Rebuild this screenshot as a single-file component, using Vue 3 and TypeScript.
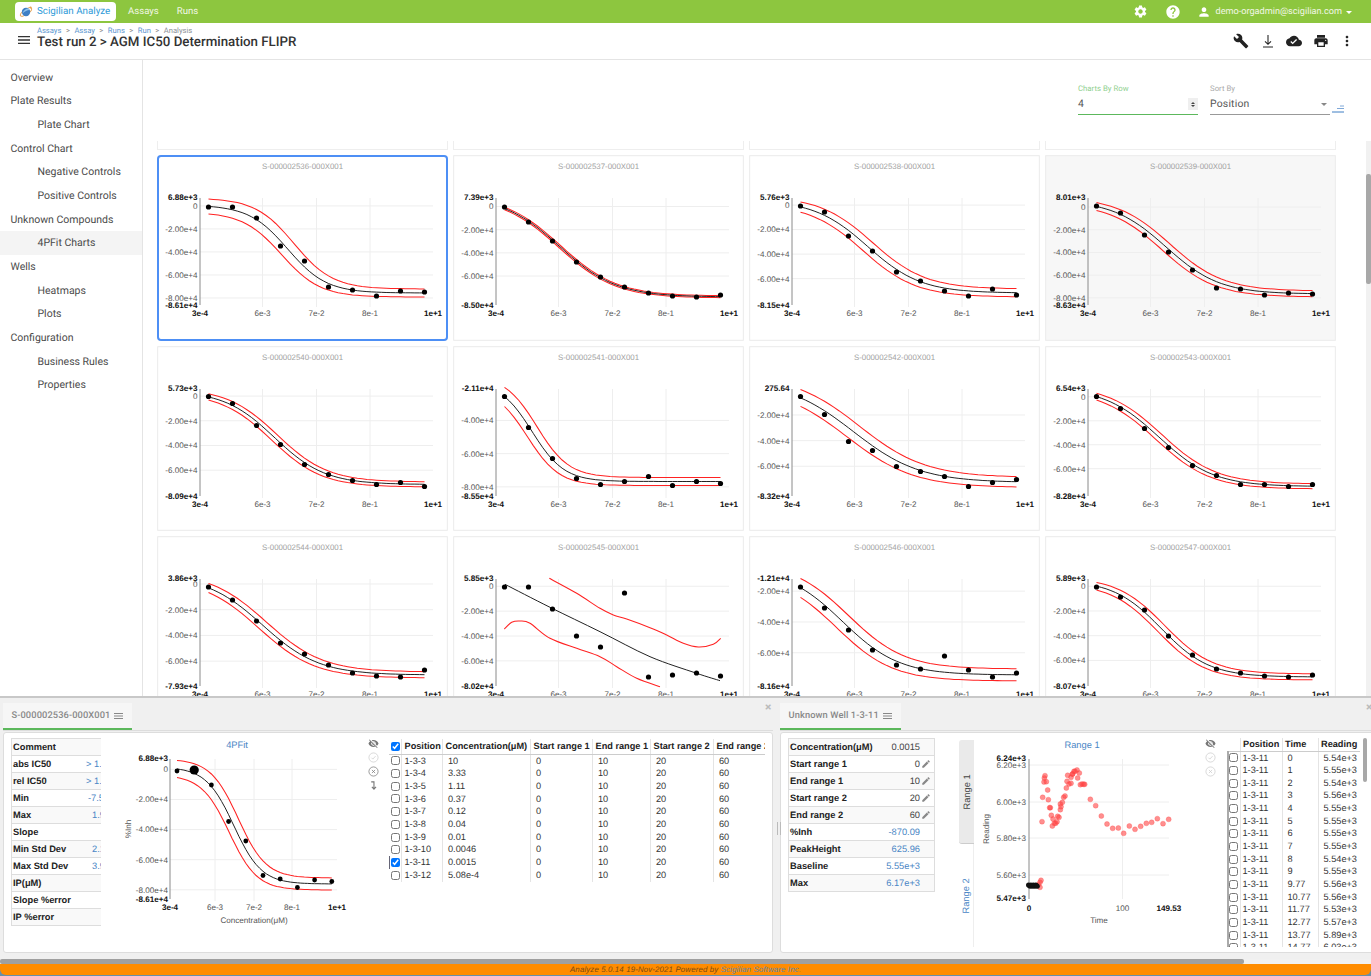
<script setup lang="ts">
type Curve = { T: number; B: number; m: number; k: number; d: [number, number]; s: number }
type Spec = {
  name: string; ymax: number; ymin: number; maxLabel: string; minLabel: string
  dots: number[]; curve?: Curve; active?: boolean; shaded?: boolean
}
type Geo = {
  ax: number; top: number; bot: number; right: number; xt: [number, string][]
  x0: number; dx: number; orgY: number; minBottomGap: number
}

const sigmoid = (c: Curve, g: Geo, dT: number, dB: number, shift: number): string => {
  const pts: string[] = []
  for (let i = 0; i <= 45; i++) {
    const t = i / 5
    const y = c.T + dT + (c.B + dB - c.T - dT) / (1 + Math.exp(-c.k * (t - c.m - shift)))
    pts.push(`${(g.x0 + g.dx * t).toFixed(1)},${(y - g.orgY).toFixed(1)}`)
  }
  return pts.join(' ')
}

const smooth = (p: number[][]): string => {
  const tx = (x: number) => x / 3 - 3
  const ty = (y: number) => y / 3 - 1
  const q = p.map(([x, y]) => [tx(x), ty(y)])
  let d = `M${q[0][0]} ${q[0][1]}`
  for (let i = 0; i < q.length - 1; i++) {
    const a = q[Math.max(i - 1, 0)], b = q[i], c = q[i + 1], e = q[Math.min(i + 2, q.length - 1)]
    const c1 = [b[0] + (c[0] - a[0]) / 6, b[1] + (c[1] - a[1]) / 6]
    const c2 = [c[0] - (e[0] - b[0]) / 6, c[1] - (e[1] - b[1]) / 6]
    d += ` C${c1[0].toFixed(1)} ${c1[1].toFixed(1)} ${c2[0].toFixed(1)} ${c2[1].toFixed(1)} ${c[0].toFixed(1)} ${c[1].toFixed(1)}`
  }
  return d
}

const build = (s: Spec, g: Geo) => {
  const scale = (g.bot - g.top) / (s.ymax - s.ymin)
  const ticks: { y: number; label: string }[] = []
  for (let v = 0; v >= -8; v -= 2) {
    const y = g.top + (s.ymax - v) * scale
    if (y - g.top < 4 || g.bot - y < g.minBottomGap) continue
    ticks.push({ y, label: v === 0 ? '0' : `${v.toFixed(2)}e+4` })
  }
  return {
    ...s,
    ticks,
    cx: s.dots.map((_, i) => g.x0 + g.dx * i),
    cy: s.dots.map((y) => y - g.orgY),
    black: s.curve ? sigmoid(s.curve, g, 0, 0, 0) : '',
    upper: s.curve ? sigmoid(s.curve, g, -s.curve.d[0], -s.curve.d[1], s.curve.s) : '',
    lower: s.curve ? sigmoid(s.curve, g, s.curve.d[0], s.curve.d[1], -s.curve.s) : ''
  }
}

const cardGeo = (orgY: number): Geo => ({
  ax: 43, top: 43, bot: 150, right: 276,
  xt: [[105.5, '6e-3'], [159.5, '7e-2'], [213, '8e-1']],
  x0: 51.5, dx: 24, orgY, minBottomGap: 6.2
})

const rows: Spec[][] = [
  [
    { name: 'S-000002536-000X001', ymax: 0.688, ymin: -8.61, maxLabel: '6.88e+3', minLabel: '-8.61e+4', active: true,
      dots: [207, 207, 218, 246, 261, 287, 290, 296, 291, 292], curve: { T: 205, B: 293, m: 3.3, k: 1.24, d: [7, 4], s: 0.26 } },
    { name: 'S-000002537-000X001', ymax: 0.739, ymin: -8.5, maxLabel: '7.39e+3', minLabel: '-8.50e+4',
      dots: [207, 222, 241, 262, 277, 287, 293, 296, 297, 295], curve: { T: 196, B: 297, m: 2.3, k: 0.85, d: [1, 1], s: 0.03 } },
    { name: 'S-000002538-000X001', ymax: 0.576, ymin: -8.15, maxLabel: '5.76e+3', minLabel: '-8.15e+4',
      dots: [206, 212, 236, 251, 272, 281, 291, 296, 289, 295], curve: { T: 200, B: 293, m: 2.8, k: 0.9, d: [4, 4], s: 0.2 } },
    { name: 'S-000002539-000X001', ymax: 0.801, ymin: -8.63, maxLabel: '8.01e+3', minLabel: '-8.63e+4', shaded: true,
      dots: [206, 213, 235, 252, 270, 288, 289, 295, 293, 294], curve: { T: 200, B: 294, m: 2.9, k: 0.9, d: [3, 3], s: 0.16 } }
  ],
  [
    { name: 'S-000002540-000X001', ymax: 0.573, ymin: -8.09, maxLabel: '5.73e+3', minLabel: '-8.09e+4',
      dots: [396, 403, 425, 444, 464, 474, 480, 484, 482, 486], curve: { T: 390, B: 484, m: 2.75, k: 0.95, d: [2.5, 2.5], s: 0.12 } },
    { name: 'S-000002541-000X001', ymax: -2.11, ymin: -8.55, maxLabel: '-2.11e+4', minLabel: '-8.55e+4',
      dots: [396, 427, 458, 478, 484, 481, 476, 485, 481, 483], curve: { T: 381, B: 481, m: 1.15, k: 1.5, d: [6, 4], s: 0.2 } },
    { name: 'S-000002542-000X001', ymax: 0.0276, ymin: -8.32, maxLabel: '275.64', minLabel: '-8.32e+4',
      dots: [396, 414, 441, 450, 466, 471, 476, 486, 482, 479], curve: { T: 380, B: 482, m: 2.2, k: 0.72, d: [6, 5], s: 0.25 } },
    { name: 'S-000002543-000X001', ymax: 0.654, ymin: -8.28, maxLabel: '6.54e+3', minLabel: '-8.28e+4',
      dots: [396, 408, 428, 447, 465, 475, 484, 484, 486, 484], curve: { T: 387, B: 486, m: 2.6, k: 0.88, d: [2.5, 2.5], s: 0.12 } }
  ],
  [
    { name: 'S-000002544-000X001', ymax: 0.386, ymin: -7.93, maxLabel: '3.86e+3', minLabel: '-7.93e+4',
      dots: [587, 600, 621, 643, 654, 665, 673, 676, 677, 670], curve: { T: 575, B: 675, m: 2.25, k: 0.85, d: [3, 3], s: 0.16 } },
    { name: 'S-000002545-000X001', ymax: 0.585, ymin: -8.02, maxLabel: '5.85e+3', minLabel: '-8.02e+4',
      dots: [587, 587, 609, 636, 647, 593, 677, 675, 673, 676] },
    { name: 'S-000002546-000X001', ymax: -1.21, ymin: -8.16, maxLabel: '-1.21e+4', minLabel: '-8.16e+4',
      dots: [587, 608, 630, 650, 665, 669, 656, 670, 677, 673], curve: { T: 568, B: 675, m: 1.75, k: 0.85, d: [6, 6], s: 0.25 } },
    { name: 'S-000002547-000X001', ymax: 0.589, ymin: -8.07, maxLabel: '5.89e+3', minLabel: '-8.07e+4',
      dots: [587, 597, 610, 636, 655, 669, 673, 676, 677, 675], curve: { T: 580, B: 677, m: 2.7, k: 1, d: [3, 3], s: 0.14 } }
  ]
]
const rowTops = [155, 345.5, 536]
const cardGeom = cardGeo(0)
const cards = rows.flatMap((r, ri) => r.map((s) => build(s, cardGeo(rowTops[ri]))))

const customBlack = smooth([[165, 148], [300, 217], [450, 290], [600, 365], [740, 415], [810, 437]])
const customUpper = smooth([[298, 130], [380, 175], [450, 220], [490, 240], [530, 252], [600, 278], [650, 300], [700, 325], [745, 336], [790, 328], [812, 310]])
const customLower = smooth([[163, 282], [185, 262], [210, 258], [240, 265], [300, 310], [380, 340], [450, 365], [500, 395], [560, 430], [630, 455]])

const detailGeo: Geo = {
  ax: 65, top: 21, bot: 161, right: 232,
  xt: [[110, '6e-3'], [149, '7e-2'], [187, '8e-1']],
  x0: 72, dx: 17.2, orgY: 739, minBottomGap: 5.5
}
const detail = build(
  { name: '', ymax: 0.688, ymin: -8.61, maxLabel: '6.88e+3', minLabel: '-8.61e+4',
    dots: [772, 771, 786, 822.5, 842, 876.5, 880, 888.5, 881, 882.5],
    curve: { T: 768, B: 885, m: 3.3, k: 1.24, d: [8, 6], s: 0.26 } },
  detailGeo
)

const z6 = [[801,383],[803,310],[807,264],[810,245],[808,252],[814,263],[818,288],[820,317],[824,341],[826,341],[829,364],[834,375],[832,396],[838,388],[842,388],[846,383],[848,367],[852,370],[856,347],[858,338],[856,330],[862,325],[866,310],[870,306],[874,282],[876,262],[882,270],[878,244],[888,250],[892,240],[897,232],[790,572],[795,565],[798,559],[795,580]]
const z7 = [[0,268],[5,240],[12,232],[18,228],[25,237],[20,252],[28,272],[33,270],[38,271],[41,271],[58,316],[74,335],[91,366],[108,390],[125,403],[142,402],[158,418],[175,396],[192,406],[209,397],[226,388],[242,385],[259,374],[276,389],[293,376]]
const redPts = [
  ...z6.map(([x, y]) => [775 + x / 3 - 975, 695 + y / 3 - 739]),
  ...z7.map(([x, y]) => [1071 + x / 3 - 975, 695 + y / 3 - 739])
]
const blackPts = Array.from({ length: 12 }, (_, i) => [53.5 + i * 0.8, 147 + (i % 3) * 0.6])
const scatterTicks = [
  { y: 27, label: '6.20e+3' }, { y: 64, label: '6.00e+3' }, { y: 100, label: '5.80e+3' }, { y: 137, label: '5.60e+3' }
]

const nav = [
  { t: 'Overview' }, { t: 'Plate Results' }, { t: 'Plate Chart', sub: true }, { t: 'Control Chart' },
  { t: 'Negative Controls', sub: true }, { t: 'Positive Controls', sub: true }, { t: 'Unknown Compounds' },
  { t: '4PFit Charts', sub: true, on: true }, { t: 'Wells' }, { t: 'Heatmaps', sub: true }, { t: 'Plots', sub: true },
  { t: 'Configuration' }, { t: 'Business Rules', sub: true }, { t: 'Properties', sub: true }
]
const crumbs = ['Assays', 'Assay', 'Runs', 'Run']

const stats = [
  { k: 'Comment', v: '.', off: 18 }, { k: 'abs IC50', v: '> 1.00e+1', off: 3 }, { k: 'rel IC50', v: '> 1.00e+1', off: 3 },
  { k: 'Min', v: '-7.55e+4', off: 5 }, { k: 'Max', v: '1.90e+3', off: 9 }, { k: 'Slope', v: '', off: 0 },
  { k: 'Min Std Dev', v: '2.10e+3', off: 9 }, { k: 'Max Std Dev', v: '3.90e+3', off: 9 },
  { k: 'IP(μM)', v: '', off: 0 }, { k: 'Slope %error', v: '', off: 0 }, { k: 'IP %error', v: '', off: 0 }
]
const wellRows = [
  { p: '1-3-3', c: '10' }, { p: '1-3-4', c: '3.33' }, { p: '1-3-5', c: '1.11' }, { p: '1-3-6', c: '0.37' },
  { p: '1-3-7', c: '0.12' }, { p: '1-3-8', c: '0.04' }, { p: '1-3-9', c: '0.01' }, { p: '1-3-10', c: '0.0046' },
  { p: '1-3-11', c: '0.0015', on: true }, { p: '1-3-12', c: '5.08e-4' }
]
const wellStats = [
  { k: 'Concentration(μM)', v: '0.0015' }, { k: 'Start range 1', v: '0', edit: true }, { k: 'End range 1', v: '10', edit: true },
  { k: 'Start range 2', v: '20', edit: true }, { k: 'End range 2', v: '60', edit: true }, { k: '%Inh', v: '-870.09', link: true },
  { k: 'PeakHeight', v: '625.96', link: true }, { k: 'Baseline', v: '5.55e+3', link: true }, { k: 'Max', v: '6.17e+3', link: true }
]
const readings = ['5.54', '5.55', '5.54', '5.56', '5.55', '5.55', '5.55', '5.55', '5.54', '5.55', '5.56', '5.56', '5.53', '5.57', '5.89', '6.03']
const times = ['0', '1', '2', '3', '4', '5', '6', '7', '8', '9', '9.77', '10.77', '11.77', '12.77', '13.77', '14.77']

const icons = {
  menu: 'M3 18h18v-2H3v2zm0-5h18v-2H3v2zm0-7v2h18V6H3z',
  gear: 'M19.14 12.94c.04-.3.06-.61.06-.94 0-.32-.02-.64-.07-.94l2.03-1.58c.18-.14.23-.41.12-.61l-1.92-3.32c-.12-.22-.37-.29-.59-.22l-2.39.96c-.5-.38-1.03-.7-1.62-.94l-.36-2.54c-.04-.24-.24-.41-.48-.41h-3.84c-.24 0-.43.17-.47.41l-.36 2.54c-.59.24-1.13.57-1.62.94l-2.39-.96c-.22-.08-.47 0-.59.22L2.74 8.87c-.12.21-.08.47.12.61l2.03 1.58c-.05.3-.09.63-.09.94s.02.64.07.94l-2.03 1.58c-.18.14-.23.41-.12.61l1.92 3.32c.12.22.37.29.59.22l2.39-.96c.5.38 1.03.7 1.62.94l.36 2.54c.05.24.24.41.48.41h3.84c.24 0 .44-.17.47-.41l.36-2.54c.59-.24 1.13-.56 1.62-.94l2.39.96c.22.08.47 0 .59-.22l1.92-3.32c.12-.22.07-.47-.12-.61l-2.01-1.58zM12 15.6c-1.98 0-3.6-1.62-3.6-3.6s1.62-3.6 3.6-3.6 3.6 1.62 3.6 3.6-1.62 3.6-3.6 3.6z',
  help: 'M12 2C6.48 2 2 6.48 2 12s4.48 10 10 10 10-4.48 10-10S17.52 2 12 2zm1 17h-2v-2h2v2zm2.07-7.75l-.9.92C13.45 12.9 13 13.5 13 15h-2v-.5c0-1.1.45-2.1 1.17-2.83l1.24-1.26c.37-.36.59-.86.59-1.41 0-1.1-.9-2-2-2s-2 .9-2 2H8c0-2.21 1.79-4 4-4s4 1.79 4 4c0 .88-.36 1.68-.93 2.25z',
  person: 'M12 12c2.21 0 4-1.79 4-4s-1.79-4-4-4-4 1.79-4 4 1.79 4 4 4zm0 2c-2.67 0-8 1.34-8 4v2h16v-2c0-2.66-5.33-4-8-4z',
  wrench: 'M22.7 19l-9.1-9.1c.9-2.3.4-5-1.5-6.9-2-2-5-2.4-7.4-1.3L9 6 6 9 1.6 4.7C.4 7.1.9 10.1 2.9 12.1c1.9 1.9 4.6 2.4 6.9 1.5l9.1 9.1c.4.4 1 .4 1.4 0l2.3-2.3c.5-.4.5-1.1.1-1.4z',
  cloud: 'M19.35 10.04C18.67 6.59 15.64 4 12 4 9.11 4 6.6 5.64 5.35 8.04 2.34 8.36 0 10.91 0 14c0 3.31 2.69 6 6 6h13c2.76 0 5-2.24 5-5 0-2.64-2.05-4.78-4.65-4.96zM10 17l-3.5-3.5 1.41-1.41L10 14.17 15.18 9l1.41 1.41L10 17z',
  print: 'M19 8H5c-1.66 0-3 1.34-3 3v6h4v4h12v-4h4v-6c0-1.66-1.34-3-3-3zm-3 11H8v-5h8v5zm3-7c-.55 0-1-.45-1-1s.45-1 1-1 1 .45 1 1-.45 1-1 1zm-1-9H6v4h12V3z',
  more: 'M12 8c1.1 0 2-.9 2-2s-.9-2-2-2-2 .9-2 2 .9 2 2 2zm0 2c-1.1 0-2 .9-2 2s.9 2 2 2 2-.9 2-2-.9-2-2-2zm0 6c-1.1 0-2 .9-2 2s.9 2 2 2 2-.9 2-2-.9-2-2-2z',
  eyeOff: 'M12 7c2.76 0 5 2.24 5 5 0 .65-.13 1.26-.36 1.83l2.92 2.92c1.51-1.26 2.7-2.89 3.43-4.75-1.73-4.39-6-7.5-11-7.5-1.4 0-2.74.25-3.98.7l2.16 2.16C10.74 7.13 11.35 7 12 7zM2 4.27l2.28 2.28.46.46C3.08 8.3 1.78 10.02 1 12c1.73 4.39 6 7.5 11 7.5 1.55 0 3.03-.3 4.38-.84l.42.42L19.73 22 21 20.73 3.27 3 2 4.27zM7.53 9.8l1.55 1.55c-.05.21-.08.43-.08.65 0 1.66 1.34 3 3 3 .22 0 .44-.03.65-.08l1.55 1.55c-.67.33-1.41.53-2.2.53-2.76 0-5-2.24-5-5 0-.79.2-1.53.53-2.2zm4.31-.78l3.15 3.15.02-.16c0-1.66-1.34-3-3-3l-.17.01z',
  pencil: 'M3 17.25V21h3.75L17.81 9.94l-3.75-3.75L3 17.25zM20.71 7.04c.39-.39.39-1.02 0-1.41l-2.34-2.34c-.39-.39-1.02-.39-1.41 0l-1.83 1.83 3.75 3.75 1.83-1.83z'
}
</script>

<template>
  <div class="app">
    <header class="topbar">
      <div class="brand">
        <svg class="logo" viewBox="0 0 20 20">
          <ellipse cx="10" cy="10" rx="9.5" ry="3.4" transform="rotate(-35 10 10)" fill="none" stroke="#e8a04a" stroke-width="1.3" />
          <circle cx="10" cy="10" r="6" fill="#3f7fc4" />
          <path d="M5 12 C8 9 12 7 15 7 L14 5 C10 5 6 8 5 12z" fill="#8fc1ea" />
          <circle cx="16.5" cy="3.5" r="1.5" fill="#e8a04a" />
        </svg>
        <span>Scigilian Analyze</span>
      </div>
      <a class="top-link first">Assays</a>
      <a class="top-link">Runs</a>
      <div class="top-right">
        <svg class="ti gear" viewBox="0 0 24 24"><path :d="icons.gear" /></svg>
        <svg class="ti help" viewBox="0 0 24 24"><path :d="icons.help" /></svg>
        <svg class="ti person" viewBox="0 0 24 24"><path :d="icons.person" /></svg>
        <span class="email">demo-orgadmin@scigilian.com</span>
        <i class="caret"></i>
      </div>
    </header>

    <div class="head">
      <svg class="burger" viewBox="3 6 18 12" preserveAspectRatio="none"><path :d="icons.menu" /></svg>
      <div class="head-titles">
        <div class="crumbs">
          <template v-for="c in crumbs" :key="c"><a>{{ c }}</a><span class="sep">&gt;</span></template><span class="last">Analysis</span>
        </div>
        <h1>Test run 2 &gt; AGM IC50 Determination FLIPR</h1>
      </div>
      <div class="tools">
        <svg class="tool" viewBox="0 0 24 24"><path :d="icons.wrench" /></svg>
        <svg class="tool" viewBox="0 0 24 24"><path d="M12 3v14M7.5 12.5 12 17l4.5-4.5M4.5 21h15" fill="none" stroke="#222" stroke-width="1.6" /></svg>
        <svg class="tool" viewBox="0 0 24 24"><path :d="icons.cloud" /></svg>
        <svg class="tool" viewBox="0 0 24 24"><path :d="icons.print" /></svg>
        <svg class="tool" viewBox="0 0 24 24"><path :d="icons.more" /></svg>
      </div>
    </div>

    <div class="middle">
      <nav class="side">
        <a v-for="n in nav" :key="n.t" class="nav-item" :class="{ sub: n.sub, on: n.on }">{{ n.t }}</a>
      </nav>
      <main class="main">
        <div class="controls">
          <div class="field green">
            <label>Charts By Row</label>
            <div class="val">4<span class="spin"><i class="up"></i><i class="down"></i></span></div>
          </div>
          <div class="field">
            <label>Sort By</label>
            <div class="val">Position<i class="sel"></i></div>
          </div>
          <svg class="sort" viewBox="0 0 12 8">
            <path d="M8 1h4" stroke="#7fa8d8" fill="none" />
            <path d="M5 3.5h7" stroke="#7fa8d8" fill="none" />
            <path d="M0 7h12" stroke="#3f7fc4" fill="none" />
          </svg>
        </div>
        <div class="scroller">
          <div class="grid">
            <div v-for="i in 4" :key="i" class="stub"></div>
            <div v-for="c in cards" :key="c.name" class="card" :class="{ active: c.active, shaded: c.shaded }">
              <svg class="chart" width="291" height="186" viewBox="0 0 291 186">
                <text class="c-title" x="145.5" y="13.5" text-anchor="middle">{{ c.name }}</text>
                <line v-for="t in c.ticks" :key="t.label" :x1="cardGeom.ax" :x2="cardGeom.right" :y1="t.y" :y2="t.y" class="gl" />
                <line v-for="x in cardGeom.xt" :key="x[1]" :x1="x[0]" :x2="x[0]" :y1="cardGeom.top" :y2="cardGeom.bot + 2" class="gl" />
                <line :x1="cardGeom.ax" :x2="cardGeom.ax" :y1="cardGeom.top" :y2="cardGeom.bot" class="axis" />
                <text v-for="t in c.ticks" :key="t.label" class="tick" :x="cardGeom.ax - 2.5" :y="t.y + 2.9" text-anchor="end">{{ t.label }}</text>
                <text class="tick b" :x="cardGeom.ax - 2.5" :y="cardGeom.top + 1.9" text-anchor="end">{{ c.maxLabel }}</text>
                <text class="tick b" :x="cardGeom.ax - 2.5" :y="cardGeom.bot + 2.9" text-anchor="end">{{ c.minLabel }}</text>
                <text class="tick b" :x="cardGeom.ax" :y="cardGeom.bot + 11" text-anchor="middle">3e-4</text>
                <text v-for="x in cardGeom.xt" :key="x[1]" class="tick" :x="x[0]" :y="cardGeom.bot + 11" text-anchor="middle">{{ x[1] }}</text>
                <text class="tick b" :x="cardGeom.right" :y="cardGeom.bot + 11" text-anchor="middle">1e+1</text>
                <template v-if="c.curve">
                  <polyline :points="c.upper" class="red" />
                  <polyline :points="c.lower" class="red" />
                  <polyline :points="c.black" class="blk" />
                </template>
                <template v-else>
                  <path :d="customUpper" class="red" />
                  <path :d="customLower" class="red" />
                  <path :d="customBlack" class="blk" />
                </template>
                <circle v-for="(x, i) in c.cx" :key="i" :cx="x" :cy="c.cy[i]" r="2.6" class="dot" />
              </svg>
            </div>
          </div>
          <div class="vbar"><div class="vthumb"></div></div>
        </div>
      </main>
    </div>

    <section class="dock-area">
      <i class="dock-grip"></i>
      <div class="dock left">
        <div class="strip">
          <div class="tab">S-000002536-000X001<svg class="tab-menu" viewBox="3 6 18 12" preserveAspectRatio="none"><path :d="icons.menu" /></svg></div>
          <span class="close">×</span>
        </div>
        <div class="box">
          <div class="stats">
            <div v-for="s in stats" :key="s.k" class="stat">
              <b>{{ s.k }}</b><span class="link" :style="{ marginLeft: s.off + 'px' }">{{ s.v }}</span>
            </div>
          </div>
          <svg class="detail" width="255" height="200" viewBox="0 0 255 200">
            <text class="d-title" x="132" y="9.5" text-anchor="middle">4PFit</text>
            <text class="tick" x="149" y="185" text-anchor="middle">Concentration(μM)</text>
            <text class="tick" transform="translate(26 91) rotate(-90)" text-anchor="middle">%Inh</text>
            <line v-for="t in detail.ticks" :key="t.label" :x1="detailGeo.ax" :x2="detailGeo.right" :y1="t.y" :y2="t.y" class="gl" />
            <line v-for="x in detailGeo.xt" :key="x[1]" :x1="x[0]" :x2="x[0]" :y1="detailGeo.top" :y2="detailGeo.bot + 2" class="gl" />
            <line :x1="detailGeo.ax" :x2="detailGeo.ax" :y1="detailGeo.top" :y2="detailGeo.bot" class="axis" />
            <text v-for="t in detail.ticks" :key="t.label" class="tick" :x="detailGeo.ax - 2" :y="t.y + 2.9" text-anchor="end">{{ t.label }}</text>
            <text class="tick b" :x="detailGeo.ax - 2" :y="detailGeo.top + 1.9" text-anchor="end">{{ detail.maxLabel }}</text>
            <text class="tick b" :x="detailGeo.ax - 2" :y="detailGeo.bot + 2.9" text-anchor="end">{{ detail.minLabel }}</text>
            <text class="tick b" :x="detailGeo.ax" :y="detailGeo.bot + 10.5" text-anchor="middle">3e-4</text>
            <text v-for="x in detailGeo.xt" :key="x[1]" class="tick" :x="x[0]" :y="detailGeo.bot + 10.5" text-anchor="middle">{{ x[1] }}</text>
            <text class="tick b" :x="detailGeo.right" :y="detailGeo.bot + 10.5" text-anchor="middle">1e+1</text>
            <polyline :points="detail.upper" class="red" />
            <polyline :points="detail.lower" class="red" />
            <polyline :points="detail.black" class="blk" />
            <circle v-for="(x, i) in detail.cx" :key="i" :cx="x" :cy="detail.cy[i]" :r="i === 1 ? 4.6 : 2.4" class="dot" />
          </svg>
          <div class="side-icons">
            <svg class="si" viewBox="0 0 24 24"><path :d="icons.eyeOff" fill="#777" /></svg>
            <svg class="si" viewBox="0 0 24 24"><circle cx="12" cy="12" r="10" fill="none" stroke="#ccc" stroke-width="1.6" /><path d="M7.5 12.5l3 3 6-6.5" fill="none" stroke="#ccc" stroke-width="1.6" /></svg>
            <svg class="si" viewBox="0 0 24 24"><circle cx="12" cy="12" r="10" fill="none" stroke="#777" stroke-width="1.6" /><path d="M8.5 8.5l7 7M15.5 8.5l-7 7" fill="none" stroke="#777" stroke-width="1.6" /></svg>
            <svg class="si" viewBox="0 0 24 24"><path d="M7 4h6v15M8.5 15l4.5 5 4.5-5" fill="none" stroke="#777" stroke-width="2.4" /></svg>
          </div>
          <div class="wtable-wrap">
            <table class="wtable">
              <colgroup><col class="w0" /><col class="w1" /><col class="w2" /><col class="w3" /><col class="w4" /><col class="w5" /><col class="w6" /></colgroup>
              <thead>
                <tr>
                  <th class="chk"><input type="checkbox" checked /></th>
                  <th>Position</th><th>Concentration(μM)</th><th>Start range 1</th><th>End range 1</th><th>Start range 2</th><th>End range 2</th>
                </tr>
              </thead>
              <tbody>
                <tr v-for="r in wellRows" :key="r.p">
                  <td class="chk" :class="{ mark: r.on }"><input type="checkbox" :checked="r.on" /></td>
                  <td class="pos">{{ r.p }}</td><td>{{ r.c }}</td><td>0</td><td>10</td><td>20</td><td>60</td>
                </tr>
              </tbody>
            </table>
          </div>
        </div>
      </div>

      <div class="dock right">
        <div class="strip">
          <div class="tab">Unknown Well 1-3-11<svg class="tab-menu" viewBox="3 6 18 12" preserveAspectRatio="none"><path :d="icons.menu" /></svg></div>
          <span class="close">×</span>
        </div>
        <div class="box">
          <div class="wstats">
            <div v-for="s in wellStats" :key="s.k" class="wstat">
              <b>{{ s.k }}</b>
              <span class="wval" :class="{ link: s.link }">{{ s.v }}</span>
              <svg v-if="s.edit" class="pencil" viewBox="0 0 24 24"><path :d="icons.pencil" /></svg>
            </div>
          </div>
          <div class="vtabs">
            <div class="vtab on"><span>Range 1</span></div>
            <div class="vtab"><span>Range 2</span></div>
          </div>
          <svg class="scatter" width="229" height="200" viewBox="0 0 229 200">
            <text class="d-title" x="107" y="9.5" text-anchor="middle">Range 1</text>
            <text class="tick" x="124" y="185" text-anchor="middle">Time</text>
            <text class="tick" transform="translate(13.5 91) rotate(-90)" text-anchor="middle">Reading</text>
            <line v-for="t in scatterTicks" :key="t.label" x1="54" x2="194" :y1="t.y" :y2="t.y" class="gl" />
            <line x1="147.5" x2="147.5" y1="21" y2="161" class="gl" />
            <line x1="54" x2="54" y1="21" y2="161" class="axis" />
            <text v-for="t in scatterTicks" :key="t.label" class="tick" x="51" :y="t.y + 2.9" text-anchor="end">{{ t.label }}</text>
            <text class="tick b" x="51" y="22.9" text-anchor="end">6.24e+3</text>
            <text class="tick b" x="51" y="163.4" text-anchor="end">5.47e+3</text>
            <text class="tick b" x="54" y="173" text-anchor="middle">0</text>
            <text class="tick" x="147.5" y="173" text-anchor="middle">100</text>
            <text class="tick b" x="194" y="173" text-anchor="middle">149.53</text>
            <circle v-for="(p, i) in redPts" :key="'r' + i" :cx="p[0]" :cy="p[1]" r="2.5" class="red-pt" />
            <circle v-for="(p, i) in blackPts" :key="'b' + i" :cx="p[0]" :cy="p[1]" r="2.5" class="blk-pt" />
          </svg>
          <div class="side-icons narrow">
            <svg class="si" viewBox="0 0 24 24"><path :d="icons.eyeOff" fill="#777" /></svg>
            <svg class="si" viewBox="0 0 24 24"><circle cx="12" cy="12" r="10" fill="none" stroke="#ccc" stroke-width="1.6" /><path d="M7.5 12.5l3 3 6-6.5" fill="none" stroke="#ccc" stroke-width="1.6" /></svg>
            <svg class="si" viewBox="0 0 24 24"><circle cx="12" cy="12" r="10" fill="none" stroke="#ccc" stroke-width="1.6" /><path d="M8.5 8.5l7 7M15.5 8.5l-7 7" fill="none" stroke="#ccc" stroke-width="1.6" /></svg>
          </div>
          <div class="rtable-wrap">
            <table class="rtable">
              <colgroup><col class="r0" /><col class="r1" /><col class="r2" /><col class="r3" /></colgroup>
              <thead><tr><th></th><th>Position</th><th>Time</th><th>Reading</th></tr></thead>
              <tbody>
                <tr v-for="(t, i) in times" :key="t">
                  <td class="chk"><input type="checkbox" /></td>
                  <td class="pos">1-3-11</td><td>{{ t }}</td><td>{{ readings[i] }}e+3</td>
                </tr>
              </tbody>
            </table>
            <div class="rbar"></div>
          </div>
        </div>
      </div>
    </section>

    <div class="hbar"><div class="hthumb"></div></div>
    <footer class="foot">
      <div class="foot-in">Analyze 5.0.14 19-Nov-2021 Powered by <a>Scigilian Software Inc.</a></div>
    </footer>
  </div>
</template>

<style>
html, body { margin: 0; height: 100%; overflow: hidden; background: #fff; }
</style>

<style scoped>
.app {
  width: 1371px; height: 976px; display: flex; flex-direction: column; overflow: hidden;
  font-family: Roboto, "Liberation Sans", sans-serif; color: #444; background: #fff;
  text-rendering: geometricPrecision;
}
.topbar { height: 23px; flex: none; background: #8dc63f; display: flex; align-items: center; }
.brand {
  margin-left: 15px; width: 101px; height: 19px; box-sizing: border-box; background: #fff; border-radius: 4px;
  display: flex; align-items: center; padding-left: 4px; gap: 4px; color: #2f9bd8; font-size: 9.8px; white-space: nowrap;
}
.logo { width: 14px; height: 14px; flex: none; }
.top-link { color: #f2f7e6; font-size: 9.6px; }
.top-link.first { margin-left: 12px; margin-right: 18px; }
.top-right { margin-left: auto; display: flex; align-items: center; }
.ti { fill: #fff; flex: none; }
.gear { width: 15px; height: 15px; margin-right: 17px; }
.help { width: 16px; height: 16px; margin-right: 16px; }
.person { width: 14px; height: 14px; margin-right: 5px; }
.email { color: #f2f7e6; font-size: 9.15px; white-space: nowrap; }
.caret { width: 0; height: 0; border: 3px solid transparent; border-top: 3px solid #fff; border-bottom: 0; margin: 1px 19px 0 4px; }

.head {
  height: 36px; flex: none; display: flex; align-items: flex-start; border-bottom: 1.5px solid #e4e4e4; box-sizing: content-box;
}
.burger { width: 12px; height: 8px; fill: #333; margin: 13px 7px 0 18px; flex: none; }
.head-titles { display: flex; flex-direction: column; }
.crumbs { font-size: 7.6px; line-height: 9px; margin-top: 3px; color: #5b95cf; white-space: nowrap; }
.crumbs .sep { color: #888; margin: 0 4.5px; }
.crumbs .last { color: #8a8f96; }
h1 { margin: 0; font-size: 13.3px; line-height: 15px; font-weight: 500; color: #333; white-space: nowrap; }
.tools { margin-left: auto; display: flex; align-items: center; gap: 10.5px; margin-top: 10px; margin-right: 16px; }
.tool { width: 16px; height: 16px; fill: #222; flex: none; }

.middle { flex: 1; min-height: 0; display: flex; }
.side { width: 142px; flex: none; border-right: 1.5px solid #e4e4e4; padding-top: 5.5px; }
.nav-item { display: block; height: 23.7px; line-height: 23.7px; padding-left: 10.5px; font-size: 10.5px; color: #4a4a4a; white-space: nowrap; }
.nav-item.sub { padding-left: 37.5px; }
.nav-item.on { background: #f4f4f4; }
.main { flex: 1; min-width: 0; display: flex; flex-direction: column; }
.controls { height: 81px; flex: none; box-sizing: border-box; display: flex; justify-content: flex-end; padding: 24px 27px 0 0; gap: 12px; }
.field { width: 120px; height: 31px; box-sizing: border-box; border-bottom: 1px solid #999; display: flex; flex-direction: column; }
.field.green { border-bottom: 1.5px solid #5cb85c; }
.field label { font-size: 7.8px; line-height: 9px; color: #aaa; }
.field.green label { color: #8fd08f; }
.val { font-size: 10.4px; line-height: 14px; margin-top: 4px; color: #555; display: flex; align-items: center; justify-content: space-between; letter-spacing: .2px; }
.spin { width: 10px; height: 12px; background: #efefef; display: flex; flex-direction: column; align-items: center; justify-content: center; gap: 1px; }
.up, .down { width: 0; height: 0; border: 2px solid transparent; }
.up { border-bottom: 2.4px solid #444; border-top: 0; }
.down { border-top: 2.4px solid #444; border-bottom: 0; }
.sel { width: 0; height: 0; border: 3.5px solid transparent; border-top: 3.5px solid #888; border-bottom: 0; margin-right: 3px; }
.sort { width: 12px; height: 8px; margin: 21px 0 0 -10px; flex: none; }

.scroller { flex: 1; min-height: 0; overflow: hidden; position: relative; padding-left: 14px; }
.grid { display: grid; grid-template-columns: repeat(4, 291px); gap: 5px; }
.stub { height: 9px; box-sizing: border-box; border: 1.5px solid #eee; border-top: 0; }
.card { height: 185.5px; box-shadow: inset 0 0 0 1.2px #eee; border-radius: 1px; background: #fff; overflow: hidden; }
.card.active { box-shadow: inset 0 0 0 2px #4d8ff5; border-radius: 4px; }
.card.shaded { background: #f7f7f7; }
.chart { display: block; }
.c-title { font: 7.85px "Liberation Sans", sans-serif; fill: #a2a2a2; }
.gl { stroke: #eee; stroke-width: 1; }
.axis { stroke: #8a8a8a; stroke-width: 1; }
.tick { font: 8.1px "Liberation Sans", sans-serif; fill: #555; }
.tick.b { font-weight: 700; fill: #111; }
.red { fill: none; stroke: #f22; stroke-width: 1.05; }
.blk { fill: none; stroke: #222; stroke-width: 1; }
.dot { fill: #000; }
.vbar { position: absolute; right: 0; top: 0; bottom: 0; width: 5px; background: #f1f1f1; }
.vthumb { position: absolute; top: 33px; height: 110px; left: 0; right: 0; background: #a8a8a8; border-radius: 2px; }

.dock-area {
  height: 263px; flex: none; box-sizing: border-box; border-top: 2px solid #c8c8c8; background: #f0f0f0;
  display: flex; gap: 7px; padding-left: 3px; position: relative; overflow: hidden;
}
.dock-grip { position: absolute; left: 686px; top: -2px; width: 13px; height: 2px; background: #aaa; }
.dock { flex: none; display: flex; flex-direction: column; }
.dock.left { width: 770px; }
.dock.right { width: 600px; }
.dock.right::before {
  content: ""; position: absolute; left: 777px; top: 124px; width: 2px; height: 13px;
  border-left: 1px solid #bbb; border-right: 1px solid #bbb;
}
.strip { height: 33px; flex: none; box-sizing: border-box; padding-top: 5px; border-bottom: 1.5px solid #ddd; position: relative; margin-bottom: 1px; }
.tab {
  display: inline-flex; align-items: center; height: 27px; box-sizing: border-box; background: #f6f6f6; border-bottom: 2px solid #5cb85c;
  font-size: 9.3px; font-weight: 500; color: #888; padding: 0 9px 0 8.5px; gap: 4px; white-space: nowrap; letter-spacing: .1px;
}
.tab-menu { width: 9px; height: 6px; fill: #888; }
.close { position: absolute; top: 3px; left: 762px; color: #bbb; font-size: 12px; line-height: 12px; font-weight: 700; }
.dock.right .close { left: 586px; }
.box {
  height: 221px; flex: none; box-sizing: border-box; background: #fff; border: 1px solid #ddd; border-radius: 3px;
  display: flex; align-items: flex-start; padding-top: 5px; overflow: hidden; font-family: "Liberation Sans", sans-serif;
}
.dock.right .box { width: 600px; }

.stats { width: 90px; flex: none; margin-left: 7px; box-sizing: border-box; border: solid #ddd; border-width: 1px 0 0 1px; overflow: hidden; }
.stat { height: 17px; box-sizing: border-box; border-bottom: 1px solid #ddd; display: flex; align-items: center; font-size: 9.3px; padding-left: 1px; white-space: nowrap; color: #222; }
.stat:nth-child(odd) { background: #f9f9f9; }
.stat b { width: 70px; flex: none; font-weight: 700; }
.link { color: #4a86c5; }
.detail { flex: none; margin: 0 0 0 4px; display: block; }
.d-title { font: 9.3px "Liberation Sans", sans-serif; fill: #4a86c5; }
.side-icons { width: 12px; flex: none; display: flex; flex-direction: column; align-items: center; gap: 3px; margin: 0 0 0 7px; }
.si { width: 11px; height: 11px; flex: none; }
.wtable-wrap { width: 376px; flex: none; overflow: hidden; margin-left: 10px; padding-top: 1px; }
table { border-collapse: collapse; table-layout: fixed; font-size: 9.2px; color: #333; }
.wtable { width: 376px; }
.w0 { width: 12.5px; } .w1 { width: 41px; } .w2 { width: 88px; } .w3 { width: 62px; } .w4 { width: 58px; } .w5 { width: 63px; } .w6 { width: 52px; }
th {
  height: 14px; padding: 0 0 0 2.5px; text-align: left; font-weight: 700; color: #222; border-bottom: 1.5px solid #ccc; border-left: 1px solid #e4e4e4; white-space: nowrap; overflow: hidden;
}
.wtable th { height: 14.5px; }
td { height: 12.7px; padding: 0 0 0 5px; border-left: 1px solid #e4e4e4; white-space: nowrap; line-height: 12.7px; }
td.pos { padding-left: 2.5px; }
td.chk, th.chk { padding: 0 0 0 2px; border-left: 0; position: relative; }
td.mark::before { content: ""; position: absolute; left: 0; top: 0; bottom: 0; width: 1px; background: #667; }
input[type="checkbox"] { width: 9px; height: 9px; margin: 0; display: block; }

.wstats { width: 147px; flex: none; margin-left: 7px; box-sizing: border-box; border: 1px solid #ddd; border-bottom: 0; }
.wstat { height: 17px; box-sizing: border-box; border-bottom: 1px solid #ddd; display: flex; align-items: center; font-size: 9.3px; padding-left: 1px; color: #222; white-space: nowrap; position: relative; }
.wstat:nth-child(odd) { background: #f9f9f9; }
.wstat b { font-weight: 700; }
.wval { margin-left: auto; margin-right: 14px; color: #444; }
.wval.link { color: #4a86c5; }
.pencil { position: absolute; right: 3px; top: 3px; width: 10px; height: 10px; fill: #888; }
.vtabs { width: 15px; flex: none; margin: 2px 0 0 24px; display: flex; flex-direction: column; }
.vtab { height: 103px; display: flex; align-items: center; justify-content: center; font-size: 9.3px; color: #4a86c5; border-right: 1px solid #eee; }
.vtab.on { background: #eaeaea; color: #444; border-radius: 3px 0 0 3px; border-right: 0; border-bottom: 1px solid #ccc; }
.vtab span { transform: rotate(-90deg); white-space: nowrap; }
.scatter { flex: none; margin-left: 1px; display: block; }
.red-pt { fill: #f44; fill-opacity: .6; stroke: #f44; stroke-width: .5; stroke-opacity: .6; }
.blk-pt { fill: #111; }
.side-icons.narrow { margin-left: 0; }
.rtable-wrap { width: 140px; height: 209px; flex: none; overflow: hidden; position: relative; margin-left: 11px; }
.rtable { width: 132px; }
.r0 { width: 12px; } .r1 { width: 42px; } .r2 { width: 36px; } .r3 { width: 42px; }
.rtable th { height: 12.5px; }
.rtable th:first-child { border-left: 0; }
.rtable td { height: 12.65px; line-height: 12.65px; }
.rtable td.chk { border-left: 2px solid #aaa; padding-left: 0; }
.rtable td.pos { padding-left: 2px; }
.rbar { position: absolute; right: 0; top: 0; width: 4.5px; height: 44px; background: #a8a8a8; border-radius: 2px; }

.hbar { height: 5px; flex: none; background: #f1f1f1; position: relative; }
.hthumb { width: 1244px; height: 5px; background: #a0a0a0; border-radius: 2px; }
.foot { height: 12px; flex: none; background: #6a8fa8; }
.foot-in {
  height: 11px; background: #ff8c00; border-radius: 0 0 6px 6px; text-align: center; font: italic 7.9px/11px "Liberation Sans", sans-serif; color: #7a4a10;
  letter-spacing: .12px;
}
.foot-in a { color: #5d86a8; }
</style>
